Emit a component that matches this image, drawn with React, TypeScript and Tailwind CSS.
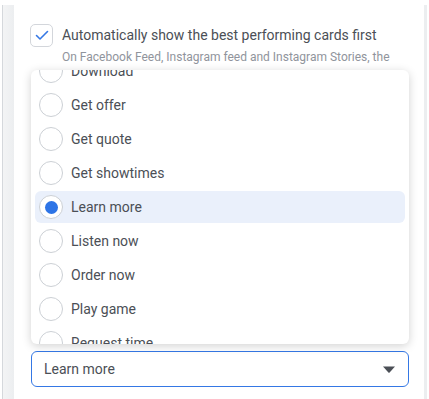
import React from "react";

const options = [
  "Download",
  "Get offer",
  "Get quote",
  "Get showtimes",
  "Learn more",
  "Listen now",
  "Order now",
  "Play game",
  "Request time",
];

const Radio = ({ checked }: { checked: boolean }) => (
  <span className="flex h-6 w-6 shrink-0 items-center justify-center rounded-full border border-[#ccd0d5] bg-white">
    {checked && <span className="h-[13px] w-[13px] rounded-full bg-[#2d74e6]" />}
  </span>
);

const OptionRow = ({ label, selected }: { label: string; selected: boolean }) => (
  <li className="h-[34px] px-1 py-px">
    <div
      className={`flex h-full items-center gap-2 rounded-md px-1 ${
        selected ? "bg-[#eaf0fb]" : ""
      }`}
    >
      <Radio checked={selected} />
      <span className="text-[14px] text-[#4b4f56]">{label}</span>
    </div>
  </li>
);

export default function App() {
  const selected = "Learn more";

  return (
    <div
      className="flex h-[399px] w-[429px] overflow-hidden bg-white"
      style={{ fontFamily: "Roboto, 'Liberation Sans', sans-serif" }}
    >
      <div className="mt-[5px] ml-[2px] w-[12px] shrink-0 border-l border-[#d5d8dc] bg-gradient-to-r from-[#f3f4f5] to-[#eceef0]" />

      <main className="relative w-[410px] shrink-0 bg-white">
        <div className="flex items-start gap-[9px] pt-[24px] pl-[16px]">
          <span className="flex h-[23px] w-[23px] shrink-0 items-center justify-center rounded-[5px] border border-[#d3d6db] bg-white">
            <svg width="14" height="11" viewBox="0 0 14 11" fill="none">
              <path
                d="M1.5 5.5 L5 9 L12.5 1.5"
                stroke="#3578e5"
                strokeWidth="1.6"
                strokeLinecap="round"
                strokeLinejoin="round"
              />
            </svg>
          </span>
          <div className="pt-[2px]">
            <p className="text-[14px] leading-[18px] text-[#4b4f56]">
              Automatically show the best performing cards first
            </p>
            <p className="mt-[5px] text-[12px] leading-[16px] text-[#90949c]">
              On Facebook Feed, Instagram feed and Instagram Stories, the
            </p>
          </div>
        </div>

        <div className="absolute top-[70px] left-[17px] z-10 h-[274px] w-[378px] overflow-hidden rounded-md bg-white shadow-[0_2px_10px_rgba(0,0,0,0.18)]">
          <ul className="-mt-[16px]">
            {options.map((o) => (
              <OptionRow key={o} label={o} selected={o === selected} />
            ))}
          </ul>
        </div>

        <div className="mt-[286px] ml-[17px] flex h-[36px] w-[378px] items-center justify-between rounded-md border border-[#3578e5] bg-white pr-[13px] pl-[12px]">
          <span className="text-[14px] text-[#4b4f56]">{selected}</span>
          <svg width="12" height="7" viewBox="0 0 12 7">
            <path d="M0 0.5 H12 L6.6 6.4 Q6 7 5.4 6.4 Z" fill="#4b4f56" />
          </svg>
        </div>
      </main>

      <div className="mt-[5px] w-[3px] shrink-0 bg-[#eceef0]" />
    </div>
  );
}
